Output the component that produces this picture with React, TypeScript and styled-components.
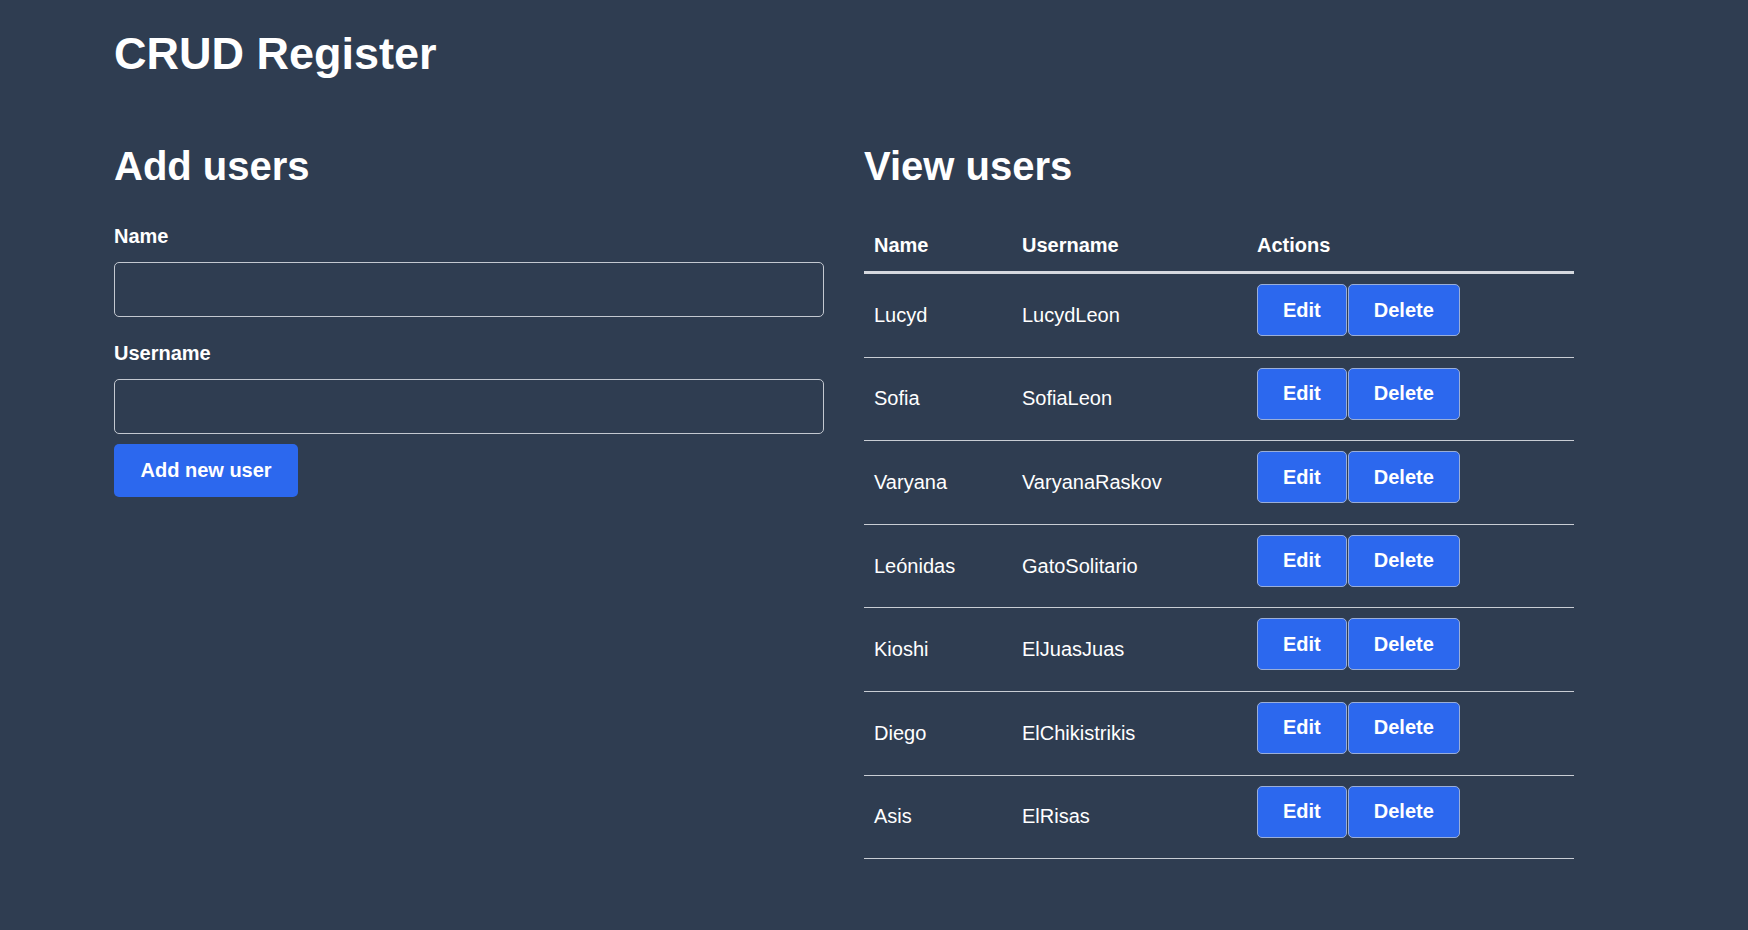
import React from "react";
import styled, { createGlobalStyle } from "styled-components";

const GlobalStyle = createGlobalStyle`
  html, body {
    margin: 0;
    padding: 0;
    background: #2f3d51;
  }
  body {
    font-family: "Liberation Sans", Arial, sans-serif;
    color: #ffffff;
  }
  * { box-sizing: border-box; }
`;

const Page = styled.div`
  min-height: 930px;
  padding: 28px 114px 40px;
  background: #2f3d51;
`;

const Title = styled.h1`
  margin: 0;
  font-size: 45px;
  font-weight: 700;
  line-height: 51px;
`;

const Columns = styled.div`
  display: grid;
  grid-template-columns: 710px 710px;
  column-gap: 40px;
  margin-top: 64px;
  align-items: start;
`;

const SectionTitle = styled.h2`
  margin: 0;
  font-size: 40px;
  font-weight: 700;
  line-height: 46px;
`;

const Form = styled.form`
  display: flex;
  flex-direction: column;
  margin-top: 36px;
`;

const Label = styled.label`
  display: block;
  font-size: 20px;
  font-weight: 700;
  line-height: 23px;
  margin-bottom: 14px;
`;

const Input = styled.input<{ $last?: boolean }>`
  display: block;
  width: 100%;
  height: 55px;
  background: transparent;
  border: 1px solid #c3c8d0;
  border-radius: 5px;
  color: #fff;
  font-family: inherit;
  font-size: 20px;
  padding: 0 12px;
  margin: 0 0 ${(p) => (p.$last ? "10px" : "25px")};
  outline: none;
`;

const PrimaryButton = styled.button`
  align-self: flex-start;
  height: 53px;
  padding: 0 26.5px;
  border: none;
  border-radius: 5px;
  background: #2c68ee;
  color: #fff;
  font-family: inherit;
  font-size: 20px;
  font-weight: 700;
  cursor: pointer;
`;

const Table = styled.table`
  width: 710px;
  margin-top: 29px;
  border-collapse: collapse;
  table-layout: fixed;
`;

const HeadCell = styled.th<{ $w?: number }>`
  width: ${(p) => (p.$w ? `${p.$w}px` : "auto")};
  text-align: left;
  font-size: 20px;
  font-weight: 700;
  line-height: 23px;
  padding: 16px 10px 14px;
  border-bottom: 3px solid #d5d8de;
`;

const Row = styled.tr`
  border-bottom: 1px solid #c9cdd4;
`;

const Cell = styled.td`
  font-size: 20px;
  line-height: 23px;
  padding: 0 10px;
  vertical-align: middle;
`;

const ActionCell = styled.td`
  padding: 10px 10px 20.6px;
  vertical-align: top;
  white-space: nowrap;
`;

const ActionButton = styled.button`
  display: inline-block;
  height: 52px;
  padding: 0 25px;
  margin-right: 1px;
  border: 1px solid #9aaed8;
  border-radius: 5px;
  background: #2c68ee;
  color: #fff;
  font-family: inherit;
  font-size: 20px;
  font-weight: 700;
  line-height: 23px;
  vertical-align: top;
  cursor: pointer;
`;

const users = [
  { name: "Lucyd", username: "LucydLeon" },
  { name: "Sofia", username: "SofiaLeon" },
  { name: "Varyana", username: "VaryanaRaskov" },
  { name: "Leónidas", username: "GatoSolitario" },
  { name: "Kioshi", username: "ElJuasJuas" },
  { name: "Diego", username: "ElChikistrikis" },
  { name: "Asis", username: "ElRisas" },
];

export default function App() {
  return (
    <>
      <GlobalStyle />
      <Page>
        <Title>CRUD Register</Title>
        <Columns>
          <section>
            <SectionTitle>Add users</SectionTitle>
            <Form onSubmit={(e) => e.preventDefault()}>
              <Label htmlFor="name">Name</Label>
              <Input id="name" type="text" />
              <Label htmlFor="username">Username</Label>
              <Input id="username" type="text" $last />
              <PrimaryButton type="submit">Add new user</PrimaryButton>
            </Form>
          </section>
          <section>
            <SectionTitle>View users</SectionTitle>
            <Table>
              <thead>
                <tr>
                  <HeadCell $w={148}>Name</HeadCell>
                  <HeadCell $w={235}>Username</HeadCell>
                  <HeadCell>Actions</HeadCell>
                </tr>
              </thead>
              <tbody>
                {users.map((u) => (
                  <Row key={u.username}>
                    <Cell>{u.name}</Cell>
                    <Cell>{u.username}</Cell>
                    <ActionCell>
                      <ActionButton>Edit</ActionButton>
                      <ActionButton>Delete</ActionButton>
                    </ActionCell>
                  </Row>
                ))}
              </tbody>
            </Table>
          </section>
        </Columns>
      </Page>
    </>
  );
}
